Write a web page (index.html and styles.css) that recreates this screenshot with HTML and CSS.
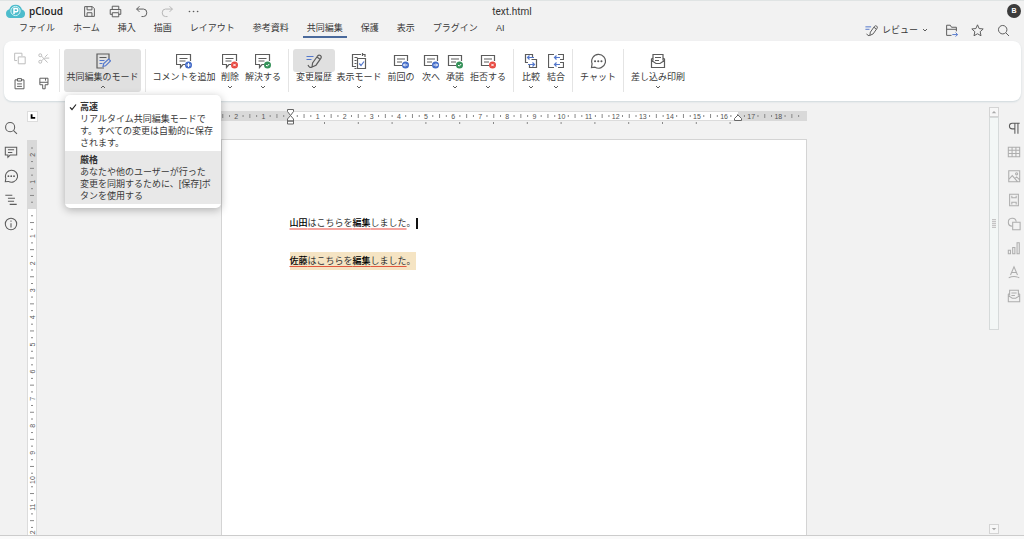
FILE: index.html
```html
<!DOCTYPE html>
<html lang="ja">
<head>
<meta charset="utf-8">
<meta name="viewport" content="width=device-width, initial-scale=1">
<title>text.html</title>
<link rel="stylesheet" href="styles.css">
</head>
<body>
<svg class="defs" aria-hidden="true">
  <symbol id="search" viewBox="0 0 16 16"><circle cx="7" cy="7" r="5.200"/><path d="M11 11l3.800 3.800"/></symbol>
  <symbol id="caret" viewBox="0 0 6 6"><path d="M1 2l2 2 2-2"/></symbol>
  <symbol id="caret-up" viewBox="0 0 6 6"><path d="M1 4l2-2 2 2"/></symbol>
  <symbol id="bubble" viewBox="0 0 16 16"><path d="M9 11.500H7L4.500 14.500v-3H.5v-10h14V8M3.500 5.500h8M3.500 8h6"/></symbol>
  <symbol id="note" viewBox="0 0 16 16"><path d="M9 12.500H1.500v-10h13V8M4 6h8M4 9h5"/></symbol>
  <symbol id="ok" viewBox="0 0 16 16"><circle class="green" cx="12.500" cy="12" r="3.500"/><path class="mark" d="M11 12l1.200 1.200 2-2.200"/></symbol>
  <symbol id="no" viewBox="0 0 16 16"><circle class="red" cx="12.500" cy="12" r="3.500"/><path class="mark" d="M11.300 10.800l2.400 2.400m0-2.400l-2.400 2.400"/></symbol>
  <symbol id="plus" viewBox="0 0 16 16"><circle class="blue" cx="12.500" cy="12" r="3.500"/><path class="mark" d="M12.500 10v4M10.500 12h4"/></symbol>
  <symbol id="prev" viewBox="0 0 16 16"><circle class="blue" cx="12.500" cy="12" r="3.500"/><path class="mark" d="M14.500 12h-4m1.500-1.500L10.500 12l1.500 1.500"/></symbol>
  <symbol id="next" viewBox="0 0 16 16"><circle class="blue" cx="12.500" cy="12" r="3.500"/><path class="mark" d="M10.500 12h4m-1.500-1.500l1.500 1.500-1.500 1.500"/></symbol>
  <symbol id="chat" viewBox="0 0 16 16"><path d="M1.500 14.500l.6-3.800A6.900 6.900 0 1 1 5 14.200z"/><path class="dots" d="M5 8.200h.1M8.200 8.200h.1M11.400 8.200h.1"/></symbol>
  <symbol id="track" viewBox="0 0 16 16"><path class="accent" d="M.5 3.500h7M.5 6.500h5"/><path d="M6 14l.6-4 5-7q1.300-1.500 2.800-.4t.4 2.800L10 12.200 6 14zM11 4l3 2.200M2 12q1.500 3.500 4 2"/></symbol>
  <symbol id="mail" viewBox="0 0 16 16"><path d="M3 7.500v-6h10v6M1.500 6v8.500h13V6L13 5M3 5L1.500 6v1.500L6 10.500h4l4.500-3M5 4.500h6M5 7.500h4"/></symbol>
  <symbol id="shapes" viewBox="0 0 16 16"><path d="M6 10.500a4.500 4.500 0 1 1 4.500-5"/><path d="M6.500 6h8.500v8.500H6.500z"/></symbol>
</svg>

<header class="top">
  <div class="titlebar">
    <div class="tools">
      <a class="brand" href="#"><svg class="logo" viewBox="0 0 21 16"><path class="cloud" d="M5 15a4.500 4.500 0 0 1-.7-8.800A6.700 6.700 0 0 1 17 6.500 4.400 4.400 0 0 1 16.500 15z"/><circle class="ring" cx="10.500" cy="8" r="4.600"/><path class="letter" d="M9 11V5.600h2.200a1.600 1.600 0 0 1 0 3.200H9"/></svg>pCloud</a>
      <button aria-label="保存"><svg class="i" viewBox="0 0 16 16"><path d="M2 2h9.500L14 4.500V14H2zM5 2v4h6V2M5 14V9.500h6V14"/></svg></button>
      <button aria-label="印刷"><svg class="i" viewBox="0 0 16 16"><path d="M4 5.500v-4h8v4M4 11.500H1.500v-6h13v6H12M4 9.500h8v5H4zM11.500 7.500h1"/></svg></button>
      <button aria-label="元に戻す"><svg class="i" viewBox="0 0 16 16"><path d="M5.500 1.500L2 5l3.500 3.500M2 5h8.500a4 4.600 0 0 1 0 9.200H8"/></svg></button>
      <button class="faint" aria-label="やり直し"><svg class="i" viewBox="0 0 16 16"><path d="M10.500 1.500L14 5l-3.500 3.500M14 5H5.500a4 4.600 0 0 0 0 9.200H8"/></svg></button>
      <button aria-label="その他"><svg class="i" viewBox="0 0 16 16"><path class="dots" d="M3 8h.1M8 8h.1M13 8h.1"/></svg></button>
    </div>
    <h1 class="filename">text.html</h1>
    <button class="avatar" aria-label="ユーザー">B</button>
  </div>
  <div class="menubar">
    <nav class="tabs">
      <a href="#">ファイル</a><a href="#">ホーム</a><a href="#">挿入</a><a href="#">描画</a><a href="#">レイアウト</a><a href="#">参考資料</a><a href="#" class="active">共同編集</a><a href="#">保護</a><a href="#">表示</a><a href="#">プラグイン</a><a href="#">AI</a>
    </nav>
    <div class="actions">
      <button class="review"><svg class="i"><use href="#track"/></svg>レビュー<svg class="caret"><use href="#caret"/></svg></button>
      <button aria-label="場所を開く"><svg class="i" viewBox="0 0 16 16"><path d="M8 14H2V1.500h4.500l1.500 2.500h6V9M2 6.500h12"/><path class="accent" d="M9 13h6.500m-2.500-2.500L15.500 13 13 15.500"/></svg></button>
      <button aria-label="お気に入り"><svg class="i" viewBox="0 0 16 16"><path d="M8 1l2 4.600 5 .5-3.700 3.400 1 5L8 12l-4.300 2.500 1-5L1 6.100l5-.5z"/></svg></button>
      <button aria-label="検索"><svg class="i"><use href="#search"/></svg></button>
    </div>
  </div>
</header>

<section class="ribbon" aria-label="共同編集">
  <div class="group clipboard">
    <button class="faint" aria-label="コピー"><svg class="i" viewBox="0 0 16 16"><path d="M5 10.500H2v-9h9V5M6.500 6h8.500v8.500H6.500z"/></svg></button>
    <button class="faint" aria-label="切り取り"><svg class="i" viewBox="0 0 16 16"><circle cx="4" cy="4" r="1.800"/><circle cx="4" cy="12" r="1.800"/><path d="M5.500 5L13 13M5.500 11L9 7.500h6M10 6l3-3"/></svg></button>
    <button aria-label="貼り付け"><svg class="i" viewBox="0 0 16 16"><path d="M5 3.500H2.500v11h11v-11H11M5.500 2h5v3h-5zM5 8.500h6M5 11.500h6"/></svg></button>
    <button aria-label="書式のコピー"><svg class="i" viewBox="0 0 16 16"><path d="M3.500 1.500h10v8H10v5H7v-5H3.500zM3.500 6.500h10M10.500 1.500v3"/></svg></button>
  </div>
  <div class="group">
    <div class="mode">
      <button class="tool w77 pressed" aria-expanded="true"><span class="pic"><svg viewBox="0 0 16 16"><path d="M9 15H2V1h12v5M4.500 4.500h7"/><path class="accent" d="M4.500 7.500h5M4.500 10.500h3M8 13.500l.7-3 5-4.500 1.800 1.800-5 5z"/></svg></span><span class="label">共同編集のモード</span><svg class="caret"><use href="#caret-up"/></svg></button>
      <div class="menu" role="menu">
        <button class="item" role="menuitemradio" aria-checked="true"><svg class="check" viewBox="0 0 8 8"><path d="M1 4.300l2 2.200L7 1.500"/></svg><b>高速</b><span>リアルタイム共同編集モードで<br>す。すべての変更は自動的に保存<br>されます。</span></button>
        <button class="item hover" role="menuitemradio" aria-checked="false"><b>厳格</b><span>あなたや他のユーザーが行った<br>変更を同期するために、[保存]ボ<br>タンを使用する</span></button>
      </div>
    </div>
  </div>
  <div class="group">
    <button class="tool w68"><span class="pic"><svg><use href="#bubble"/><use href="#plus"/></svg></span><span class="label">コメントを追加</span></button>
    <button class="tool w24"><span class="pic"><svg><use href="#bubble"/><use href="#no"/></svg></span><span class="label">削除</span><svg class="caret"><use href="#caret"/></svg></button>
    <button class="tool w42"><span class="pic"><svg><use href="#bubble"/><use href="#ok"/></svg></span><span class="label">解決する</span><svg class="caret"><use href="#caret"/></svg></button>
  </div>
  <div class="group">
    <button class="tool w42 toggled"><span class="pic"><svg><use href="#track"/></svg></span><span class="label">変更履歴</span><svg class="caret"><use href="#caret"/></svg></button>
    <button class="tool w48"><span class="pic"><svg viewBox="0 0 16 16"><path d="M5 13.500H1.500v-12H10M3.500 4.500h3M3.500 7.500h2M3.500 10.500h2M6.500 5.500h8v10h-8zM11.500 1.500H14v2.500M3.500 15.500h2M11.500 0v3"/><path class="accent" d="M8.300 10.500l1.700 2 3-4"/></svg></span><span class="label">表示モード</span><svg class="caret"><use href="#caret"/></svg></button>
    <button class="tool w36"><span class="pic"><svg><use href="#note"/><use href="#prev"/></svg></span><span class="label">前回の</span></button>
    <button class="tool w24"><span class="pic"><svg><use href="#note"/><use href="#next"/></svg></span><span class="label">次へ</span></button>
    <button class="tool w24"><span class="pic"><svg><use href="#note"/><use href="#ok"/></svg></span><span class="label">承諾</span><svg class="caret"><use href="#caret"/></svg></button>
    <button class="tool w42"><span class="pic"><svg><use href="#note"/><use href="#no"/></svg></span><span class="label">拒否する</span><svg class="caret"><use href="#caret"/></svg></button>
  </div>
  <div class="group">
    <button class="tool w26"><span class="pic"><svg viewBox="0 0 16 16"><path d="M5 9.500H2.500v-8h7V4M8.500 6.500h5v8h-7V12"/><path class="accent" d="M11 4.500H4.500m2-2l-2 2 2 2M5 11.500h6.500m-2-2l2 2-2 2"/></svg></span><span class="label">比較</span><svg class="caret"><use href="#caret"/></svg></button>
    <button class="tool w24"><span class="pic"><svg viewBox="0 0 16 16"><path d="M6 1.500H.5v13H6M10 1.500h5.500v5H12M12 9.500h3.500v5H10"/><path class="accent" d="M12 4.500H6.500m2-2l-2 2 2 2M12 11.500H6.500m2-2l-2 2 2 2"/></svg></span><span class="label">結合</span><svg class="caret"><use href="#caret"/></svg></button>
  </div>
  <div class="group">
    <button class="tool w42"><span class="pic"><svg><use href="#chat"/></svg></span><span class="label">チャット</span></button>
  </div>
  <div class="group">
    <button class="tool w60"><span class="pic"><svg><use href="#mail"/></svg></span><span class="label">差し込み印刷</span><svg class="caret"><use href="#caret"/></svg></button>
  </div>
</section>

<main class="workspace">
  <nav class="side left">
    <button aria-label="検索"><svg><use href="#search"/></svg></button>
    <button aria-label="コメント"><svg viewBox="0 0 16 16"><path d="M1.500 2.500h13v9H7L4.500 14v-2.500h-3zM4.500 5.500h7M4.500 8.500h5"/></svg></button>
    <button aria-label="チャット"><svg><use href="#chat"/></svg></button>
    <button aria-label="見出し"><svg viewBox="0 0 16 16"><path d="M1.500 2.500h8M4.500 6h8M4.500 9.500h7M6.500 13h8"/></svg></button>
    <button aria-label="情報"><svg viewBox="0 0 16 16"><circle cx="8" cy="8" r="6.500"/><path d="M8 7v5M8 4v1.300"/></svg></button>
  </nav>
  <div class="vertical">
    <button class="tabstop" aria-label="タブ"><svg viewBox="0 0 10 10"><path d="M4 2.500v4h4"/></svg></button>
    <svg class="vruler" data-ruler="v"></svg>
  </div>
  <div class="canvas">
    <svg class="hruler" data-ruler="h"></svg>
    <article class="page">
      <p><span class="spell"><b>山田</b>はこちらを<b>編集</b>しました</span>。<span class="cursor"></span></p>
      <p class="marked"><span class="spell strong"><b>佐藤</b>はこちらを<b>編集</b>しました</span>。</p>
    </article>
  </div>
  <div class="scroll">
    <button aria-label="上へ"><svg viewBox="0 0 8 8"><path d="M1 5.500h6L4 2.500z"/></svg></button>
    <div class="thumb"><i></i></div>
    <button class="down" aria-label="下へ"><svg viewBox="0 0 8 8"><path d="M1 2.500h6L4 5.500z"/></svg></button>
  </div>
  <nav class="side right">
    <button class="on" aria-label="段落"><svg viewBox="0 0 16 16"><path d="M14.500 2.500H6a3.200 3.200 0 0 0 0 6.500h3M9 2.500v12M12.500 2.500v12"/></svg></button>
    <button aria-label="表"><svg viewBox="0 0 16 16"><path d="M1.500 2.500h13v11h-13zM1.500 6h13M1.500 9.800h13M5.800 2.500v11M10.200 2.500v11"/></svg></button>
    <button aria-label="画像"><svg viewBox="0 0 16 16"><path d="M2 2h12.500v12.500H2zM2 12l4-4.500 6 7M9 11l2-2 3.500 3.500"/><circle cx="11" cy="5.500" r="1.200"/></svg></button>
    <button aria-label="ヘッダー"><svg viewBox="0 0 16 16"><path d="M3 1.500h10v13H3zM5.500 3v2.500h5V3M5.500 13v-2.500h5V13"/></svg></button>
    <button aria-label="図形"><svg><use href="#shapes"/></svg></button>
    <button aria-label="グラフ"><svg viewBox="0 0 16 16"><path d="M1.500 10.500H4v4H1.500zM6.500 7.500H9v7H6.500zM11.500 2h2.500v12.500h-2.500z"/></svg></button>
    <button aria-label="テキストアート"><svg viewBox="0 0 16 16"><path d="M4 11.500L8 2l4 9.500M5.500 8.500h5M2 14.500q6-2.500 12 0"/></svg></button>
    <button aria-label="差し込み"><svg><use href="#mail"/></svg></button>
  </nav>
</main>
<footer class="status"></footer>
<script src="ruler.js"></script>
</body>
</html>
```
FILE: styles.css
```css
* { box-sizing: border-box; }
body {
  margin: 0;
  height: 100vh;
  display: flex;
  flex-direction: column;
  overflow: hidden;
  background: #f2f2f2;
  color: #383838;
  font: 9px/12px "Liberation Sans", "Noto Sans CJK JP", sans-serif;
}
button {
  margin: 0;
  padding: 0;
  border: 0;
  background: none;
  color: inherit;
  font: inherit;
  display: flex;
  align-items: center;
  justify-content: center;
}
a { color: inherit; text-decoration: none; }
svg { fill: none; stroke: #5c5c5c; stroke-width: 1.2; flex: none; }
.defs { position: absolute; width: 0; height: 0; }
.i { width: 13px; height: 13px; }
.caret { width: 6px; height: 6px; stroke-width: 1; }
.accent { stroke: #5478cc; }
.dots { stroke-width: 2; stroke-linecap: round; }
.blue { fill: #446cc8; stroke: none; }
.green { fill: #36925a; stroke: none; }
.red { fill: #e84a42; stroke: none; }
.mark { stroke: #fff; stroke-width: 1; }
.faint { opacity: .4; }

.top { border-top: 1px solid #e0e4e4; }
.titlebar {
  height: 18px;
  display: grid;
  grid-template-columns: 1fr auto 1fr;
  align-items: end;
}
.tools { display: flex; align-items: center; gap: 13px; padding-left: 5px; }
.brand {
  display: flex;
  align-items: center;
  gap: 3px;
  width: 65px;
  color: #1c1c1c;
  font: 600 10px/14px "Open Sans", sans-serif;
}
.logo { width: 21px; height: 16px; stroke: none; }
.cloud { fill: #4dbccc; }
.ring { stroke: #d5f3f5; stroke-width: 1; }
.letter { stroke: #fff; stroke-width: 1.5; }
.filename { margin: 0; font: 10px/14px Roboto, sans-serif; color: #333; }
.avatar {
  justify-self: end;
  width: 14px;
  height: 14px;
  margin: 0 3px 1px;
  border-radius: 50%;
  background: #3c3c3c;
  color: #fff;
  font: bold 7px/14px "Liberation Sans", sans-serif;
}
.menubar { display: flex; justify-content: space-between; height: 22px; }
.tabs { display: flex; padding-left: 10px; height: 19px; }
.tabs a {
  margin: 0 5px;
  padding: 3px 4px 0;
  border-bottom: 2px solid transparent;
  white-space: nowrap;
}
.tabs .active { border-color: #4a6a9c; }
.actions { display: flex; align-items: center; gap: 13px; padding-right: 14px; }
.review { gap: 4px; margin-right: 4px; }

.ribbon {
  display: flex;
  margin: 0 3px 0 4px;
  padding: 8px 0 9px;
  border-radius: 8px;
  background: #fff;
  box-shadow: 0 1px 2px #cfd8dc;
}
.group { display: flex; padding: 0 4px; border-right: 1px solid #e4e4e4; }
.group:last-child { border-right: 0; }
.clipboard {
  display: grid;
  grid-template-columns: 24px 24px;
  grid-template-rows: 18px 1fr;
  width: 56px;
  padding: 0 3px;
  row-gap: 8px;
}
.tool {
  flex-direction: column;
  justify-content: flex-start;
  height: 43px;
  border-radius: 3px;
}
.pic {
  display: flex;
  align-items: center;
  justify-content: center;
  width: 100%;
  height: 23px;
  flex: none;
  border-radius: 3px;
}
.pic svg { width: 16px; height: 16px; }
.label { line-height: 10px; white-space: nowrap; }
.tool .caret { margin-top: 2px; }
.pressed, .toggled .pic { background: #e0e0e0; }
.w24 { width: 24px; }
.w26 { width: 26px; }
.w36 { width: 36px; }
.w42 { width: 42px; }
.w48 { width: 48px; }
.w60 { width: 60px; }
.w68 { width: 68px; }
.w77 { width: 77px; }
.mode { position: relative; }
.menu {
  position: absolute;
  z-index: 2;
  top: 46px;
  left: 1px;
  width: 156px;
  padding: 3px 0 4px;
  border-radius: 5px;
  background: #fff;
  box-shadow: 0 2px 8px rgba(0, 0, 0, .28);
}
.item {
  position: relative;
  width: 100%;
  padding: 4px 0 2px 15px;
  flex-direction: column;
  align-items: flex-start;
  text-align: left;
  white-space: nowrap;
}
.item b { line-height: 11px; color: #333; }
.hover { background: #e8e8e8; }
.check { position: absolute; left: 4px; top: 5px; width: 8px; height: 8px; stroke: #222; }

.workspace { flex: 1; min-height: 0; display: flex; border-bottom: 1px solid #ccc; }
.side { display: flex; flex-direction: column; align-items: center; gap: 10px; padding-top: 20px; }
.side svg { width: 14px; height: 14px; }
.left { width: 22px; }
.right { width: 21px; }
.right button { opacity: .45; }
.right .on { opacity: 1; }
.vertical { width: 20px; display: flex; flex-direction: column; align-items: center; padding-top: 10px; }
.tabstop { width: 11px; height: 11px; background: #fff; border: 1px solid #ddd; }
.tabstop svg { width: 9px; height: 9px; stroke: #000; stroke-width: 2; }
.vruler { width: 10px; flex: 1; min-height: 0; margin-top: 18px; }
.canvas { flex: 1; display: flex; flex-direction: column; align-items: center; padding-top: 8px; min-width: 0; }
.hruler { width: 586px; height: 17px; overflow: visible; }
.ruler-bg { fill: #fff; stroke: #dcdcdc; stroke-width: 1; }
.ruler-margin { fill: #d9d9d9; stroke: none; }
.tick { stroke: #888; stroke-width: 1; }
.handle { fill: #fff; stroke: #666; stroke-width: 1; }
.num {
  fill: #555;
  stroke: none;
  font: 7px "Liberation Sans", sans-serif;
  text-anchor: middle;
}
.page {
  width: 586px;
  flex: 1;
  margin-top: 13px;
  padding: 74px 68px 0;
  border: 1px solid #d4d4d4;
  border-bottom: 0;
  background: #fff;
}
.page p { width: fit-content; margin: 0 0 20px; line-height: 18px; color: #333; }
.page b { font-weight: 500; color: #000; }
.marked { background: #f5e4c3; }
.spell {
  text-decoration: underline 2px #f6a5a0;
  text-underline-offset: 2px;
  text-decoration-skip-ink: none;
}
.strong { text-decoration: underline 1px #e0583e; text-underline-offset: 2px; }
.cursor {
  display: inline-block;
  width: 2px;
  height: 11px;
  background: #111;
  vertical-align: middle;
}
.scroll { width: 10px; margin: 0 4px; padding: 6px 0 1px; display: flex; flex-direction: column; }
.scroll button { width: 10px; height: 10px; border: 1px solid #d4d4d4; background: #f7f7f7; }
.scroll svg { width: 6px; height: 6px; fill: #aaa; stroke: none; }
.thumb {
  height: 54%;
  max-height: 213px;
  flex: 1 0 auto;
  display: flex;
  align-items: center;
  justify-content: center;
  border: 1px solid #d6dada;
  background: #f3f7f6;
}
.thumb i { width: 4px; height: 9px; background: repeating-linear-gradient(#c4c4c4 0 1px, #e8e8e8 1px 2px); }
.scroll .down { margin-top: auto; }
.status { height: 3px; background: #fafafa; }
```
FILE: ruler.js
```js
const NS = "http://www.w3.org/2000/svg";
const CM = 27.1;

function add(parent, name, attrs, text) {
  const node = document.createElementNS(NS, name);
  for (const key in attrs) node.setAttribute(key, attrs[key]);
  if (text !== undefined) node.textContent = text;
  parent.append(node);
  return node;
}

// Draws quarter-centimetre marks from index `first` to `last`; `at` maps an index to a position.
function scale(parent, first, last, at) {
  for (let q = first; q <= last; q++) {
    const x = at(q);
    if (q === 0) continue;
    if (q % 4 === 0) {
      add(parent, "text", { class: "num", x, y: 7.5 }, Math.abs(q / 4));
    } else {
      const half = q % 2 === 0 ? 2 : 1;
      add(parent, "path", { class: "tick", d: `M${x} ${5 - half}v${half * 2}` });
    }
  }
}

const h = document.querySelector('[data-ruler="h"]');
add(h, "rect", { class: "ruler-bg", x: 0.5, y: 2.5, width: 585, height: 9 });
add(h, "rect", { class: "ruler-margin", x: 0, y: 2, width: 69, height: 10 });
add(h, "rect", { class: "ruler-margin", x: 517, y: 2, width: 69, height: 10 });
const across = add(h, "g", { transform: "translate(0 2)" });
scale(across, -10, 75, q => 69.5 + q * CM / 4);
for (let x = 103.5; x < 517; x += 33.8) {
  add(h, "path", { class: "tick", d: `M${x} 13v2` });
}
add(h, "path", { class: "handle", d: "M66.5 .5h6v2l-3 4-3-4zM66.5 12v-2l3-3.5 3 3.5v2zM66.5 12h6v3h-6z" });
add(h, "path", { class: "handle", d: "M513.5 11.5v-2l3.5-3.5 3.5 3.5v2z" });

const v = document.querySelector('[data-ruler="v"]');
const height = v.getBoundingClientRect().height;
add(v, "rect", { class: "ruler-bg", x: 0.5, y: -1, width: 9, height: height + 2 });
add(v, "rect", { class: "ruler-margin", x: 0, y: 0, width: 10, height: 69 });
const down = add(v, "g", { transform: `translate(0 ${height}) rotate(-90)` });
scale(down, -9, Math.floor((height - 69) / (CM / 4)), q => height - 69 - q * CM / 4);
```
